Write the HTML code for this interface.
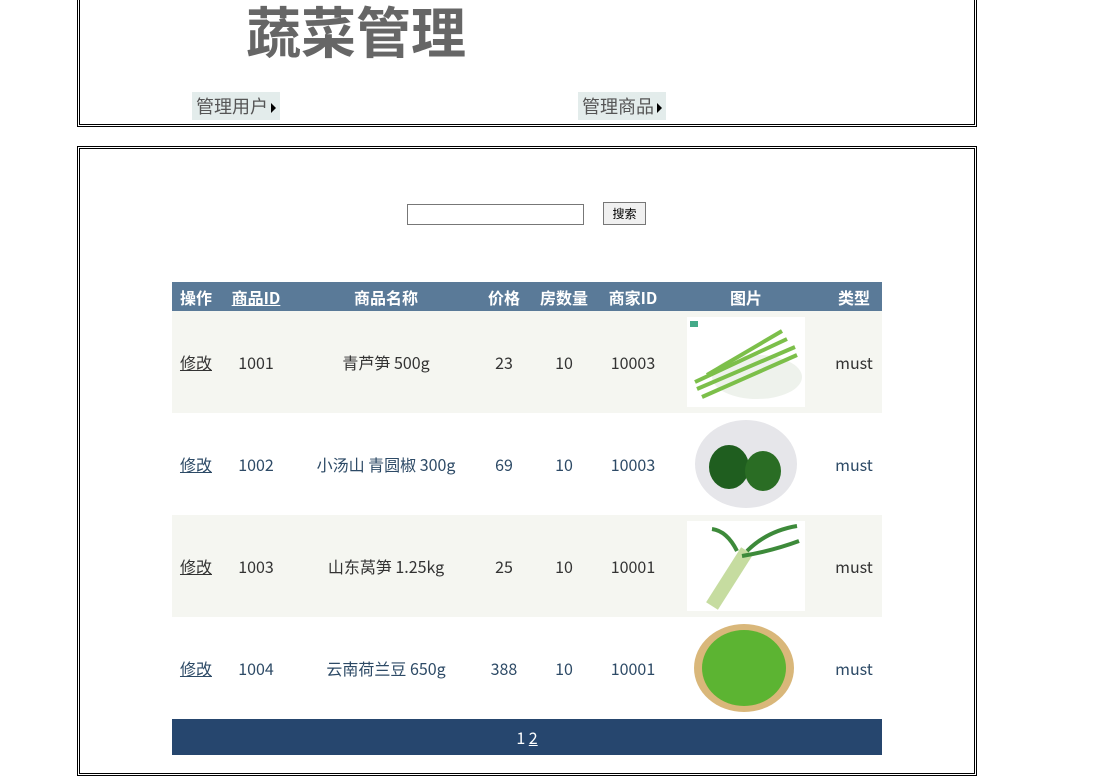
<!DOCTYPE html>
<html><head><meta charset="utf-8"><style>
body{margin:0;background:#fff;font-family:"Noto Sans CJK SC","Liberation Sans",sans-serif;width:1118px;height:755px;overflow:hidden;position:relative}
.box{position:absolute;border:3px double #000;box-sizing:border-box}
.abs{position:absolute}
.nav{position:absolute;top:92px;height:28px;background:#e3eceb;color:#555;font-size:18px;line-height:28px;padding:0 4px}
.nav:after{content:"";display:inline-block;border-left:5px solid #000;border-top:5px solid transparent;border-bottom:5px solid transparent;margin-left:3px;vertical-align:0}
table{position:absolute;left:172px;top:282px;width:710px;border-collapse:collapse;font-size:16px}
th{background:#5a7a98;color:#fff;height:29px;font-weight:bold;padding:0;font-size:16px;line-height:20px}
td{height:102px;text-align:center;padding:0;color:#333;vertical-align:middle;line-height:20px}
tr.o td{background:#f5f6f1}
tr.e td{color:#2d4a66}
td u{color:inherit}
.ft{position:absolute;left:172px;top:719px;width:710px;height:36px;background:#26466e;color:#fff;text-align:center;line-height:36px;font-size:16px}
.img{width:118px;height:90px;display:block;margin:0 auto}
</style></head><body>
<div class="box" style="left:77px;top:-5px;width:900px;height:132px"></div>
<div class="abs" style="left:246px;top:-4px;font-size:55px;font-weight:bold;color:#666;line-height:66px">蔬菜管理</div>
<div class="nav" style="left:192px">管理用户</div>
<div class="nav" style="left:578px">管理商品</div>
<div class="box" style="left:77px;top:146px;width:900px;height:630px"></div>
<input class="abs" style="left:407px;top:204px;width:177px;height:21px;box-sizing:border-box;border:1px solid #777;margin:0">
<button class="abs" style="left:603px;top:202px;width:43px;height:23px;font-size:12px;border:1px solid #777;background:#f0f0f0;padding:0;font-family:inherit">搜索</button>
<table>
<tr><th style="width:48px">操作</th><th style="width:72px"><u>商品ID</u></th><th style="width:188px">商品名称</th><th style="width:48px">价格</th><th style="width:72px">房数量</th><th style="width:66px">商家ID</th><th style="width:160px">图片</th><th>类型</th></tr>
<tr class="o"><td><u>修改</u></td><td>1001</td><td>青芦笋 500g</td><td>23</td><td>10</td><td>10003</td><td><svg class="img" viewBox="0 0 118 90"><rect width="118" height="90" fill="#fff"/><ellipse cx="70" cy="60" rx="45" ry="22" fill="#eef2ec"/><g stroke="#7cbf4a" stroke-width="4"><line x1="8" y1="65" x2="100" y2="22"/><line x1="10" y1="72" x2="108" y2="30"/><line x1="15" y1="80" x2="110" y2="38"/><line x1="20" y1="58" x2="95" y2="14"/></g><rect x="3" y="4" width="8" height="6" fill="#4a8"/></svg></td><td>must</td></tr>
<tr class="e"><td><u>修改</u></td><td>1002</td><td>小汤山 青圆椒 300g</td><td>69</td><td>10</td><td>10003</td><td><svg class="img" viewBox="0 0 118 90"><ellipse cx="59" cy="45" rx="51" ry="44" fill="#e6e6ea"/><ellipse cx="42" cy="48" rx="20" ry="22" fill="#1f5e1f"/><ellipse cx="76" cy="52" rx="18" ry="20" fill="#2a6d24"/></svg></td><td>must</td></tr>
<tr class="o"><td><u>修改</u></td><td>1003</td><td>山东莴笋 1.25kg</td><td>25</td><td>10</td><td>10001</td><td><svg class="img" viewBox="0 0 118 90"><rect width="118" height="90" fill="#fff"/><line x1="25" y1="85" x2="60" y2="30" stroke="#c6dca0" stroke-width="14"/><g stroke="#3d8a3a" stroke-width="4" fill="none"><path d="M60 30 Q80 10 110 5"/><path d="M55 35 Q85 30 112 20"/><path d="M50 30 Q40 10 25 8"/></g></svg></td><td>must</td></tr>
<tr class="e"><td><u>修改</u></td><td>1004</td><td>云南荷兰豆 650g</td><td>388</td><td>10</td><td>10001</td><td><svg class="img" viewBox="0 0 118 90"><ellipse cx="57" cy="45" rx="50" ry="44" fill="#d9b77a"/><ellipse cx="57" cy="45" rx="42" ry="38" fill="#5cb432"/></svg></td><td>must</td></tr>
</table>
<div class="ft">1 <u>2</u></div>
</body></html>
